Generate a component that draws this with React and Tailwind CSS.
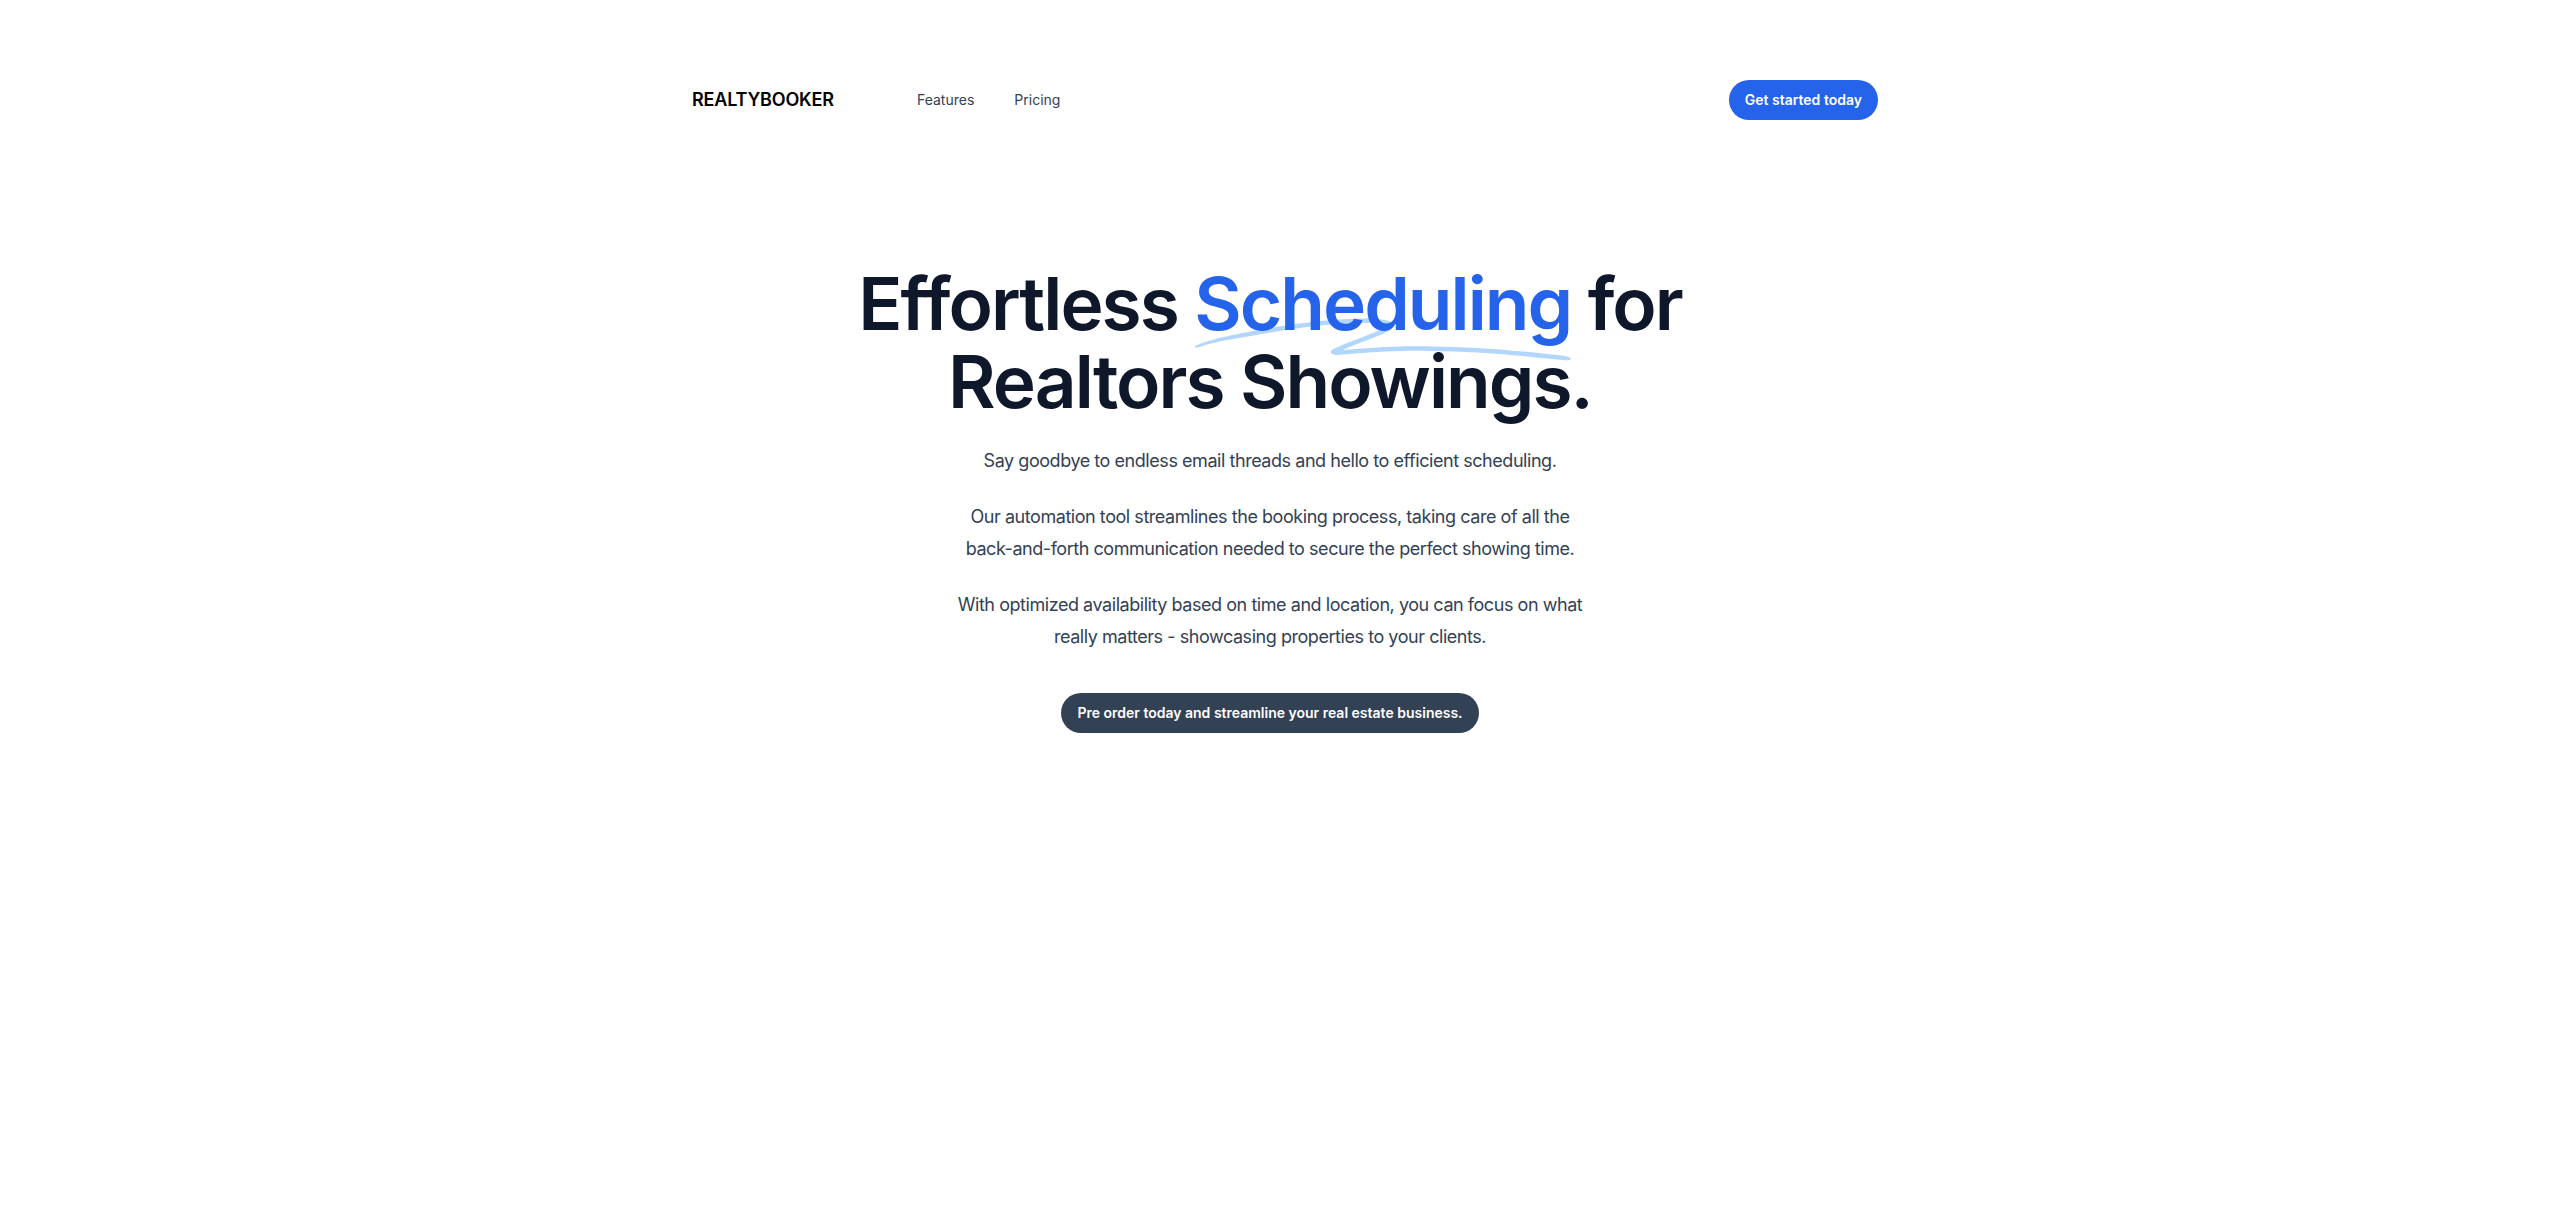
import React from 'react';

const NAV_LINKS = ['Features', 'Pricing'];

function Underline() {
  return (
    <svg
      aria-hidden="true"
      viewBox="0 0 418 42"
      className="absolute left-0 top-2/3 h-[0.58em] w-full fill-[#93c5fd]/70"
      preserveAspectRatio="none"
    >
      <path d="M203.371.916c-26.013-2.078-76.686 1.963-124.73 9.946L67.3 12.749C35.421 18.062 18.2 21.766 6.004 25.934 1.244 27.561.828 27.778.874 28.61c.07 1.214.828 1.121 9.595-1.176 9.072-2.377 17.15-3.92 39.246-7.496C123.565 7.986 157.869 4.492 195.942 5.046c7.461.108 19.25 1.696 19.17 2.582-.107 1.183-7.874 4.31-25.75 10.366-21.992 7.45-35.43 12.534-36.701 13.884-2.173 2.308-.202 4.407 4.442 4.734 2.654.187 3.263.157 15.593-.78 35.401-2.686 57.944-3.488 88.365-3.143 46.327.526 75.721 2.23 130.788 7.584 19.787 1.924 20.814 1.98 24.557 1.332l.066-.011c1.201-.203 1.53-1.825.399-2.335-2.911-1.31-4.893-1.604-22.048-3.261-57.509-5.556-87.871-7.36-132.059-7.842-23.239-.254-33.617-.116-50.627.674-11.629.54-42.371 2.494-46.696 2.967-2.359.259 8.133-3.625 26.504-9.81 23.239-7.825 27.934-10.149 28.304-14.005.417-4.348-3.529-6-16.878-7.066Z" />
    </svg>
  );
}

export default function App() {
  return (
    <div className="min-h-screen bg-white pr-[15px] font-['Inter','Liberation_Sans',sans-serif]">
      <header className="mx-auto max-w-7xl px-8 pt-20">
        <nav className="flex items-center justify-between">
          <div className="flex items-center">
            <a href="#" className="w-[247px] pl-[30px] text-lg font-semibold tracking-[-0.01em] text-black">
              REALTYBOOKER
            </a>
            <div className="flex gap-x-6">
              {NAV_LINKS.map(link => (
                <a key={link} href="#" className="rounded-lg px-2 py-1 text-sm text-[#334155]">
                  {link}
                </a>
              ))}
            </div>
          </div>
          <a href="#" className="rounded-full bg-[#2563eb] px-4 py-2.5 text-sm font-semibold text-white">
            Get started today
          </a>
        </nav>
      </header>

      <main className="mx-auto max-w-7xl px-8 pt-[145px] pb-16 text-center">
        <h1 className="mx-auto max-w-4xl text-[73px] leading-[78px] font-semibold tracking-[-0.027em] text-[#0f172a]">
          Effortless{' '}
          <span className="relative whitespace-nowrap text-[#2563eb]">
            <Underline />
            <span className="relative">Scheduling</span>
          </span>{' '}
          for Realtors Showings.
        </h1>
        <p className="mx-auto mt-6 max-w-[640px] text-lg leading-8 tracking-tight text-[#334155]">
          Say goodbye to endless email threads and hello to efficient scheduling.
        </p>
        <p className="mx-auto mt-6 max-w-[640px] text-lg leading-8 tracking-tight text-[#334155]">
          Our automation tool streamlines the booking process, taking care of all the back-and-forth communication needed to secure the perfect showing time.
        </p>
        <p className="mx-auto mt-6 max-w-[640px] text-lg leading-8 tracking-tight text-[#334155]">
          With optimized availability based on time and location, you can focus on what really matters - showcasing properties to your clients.
        </p>
        <div className="mt-10 flex justify-center">
          <a href="#" className="rounded-full bg-[#334155] px-4 py-2.5 text-sm font-semibold text-white">
            Pre order today and streamline your real estate business.
          </a>
        </div>
      </main>
    </div>
  );
}
